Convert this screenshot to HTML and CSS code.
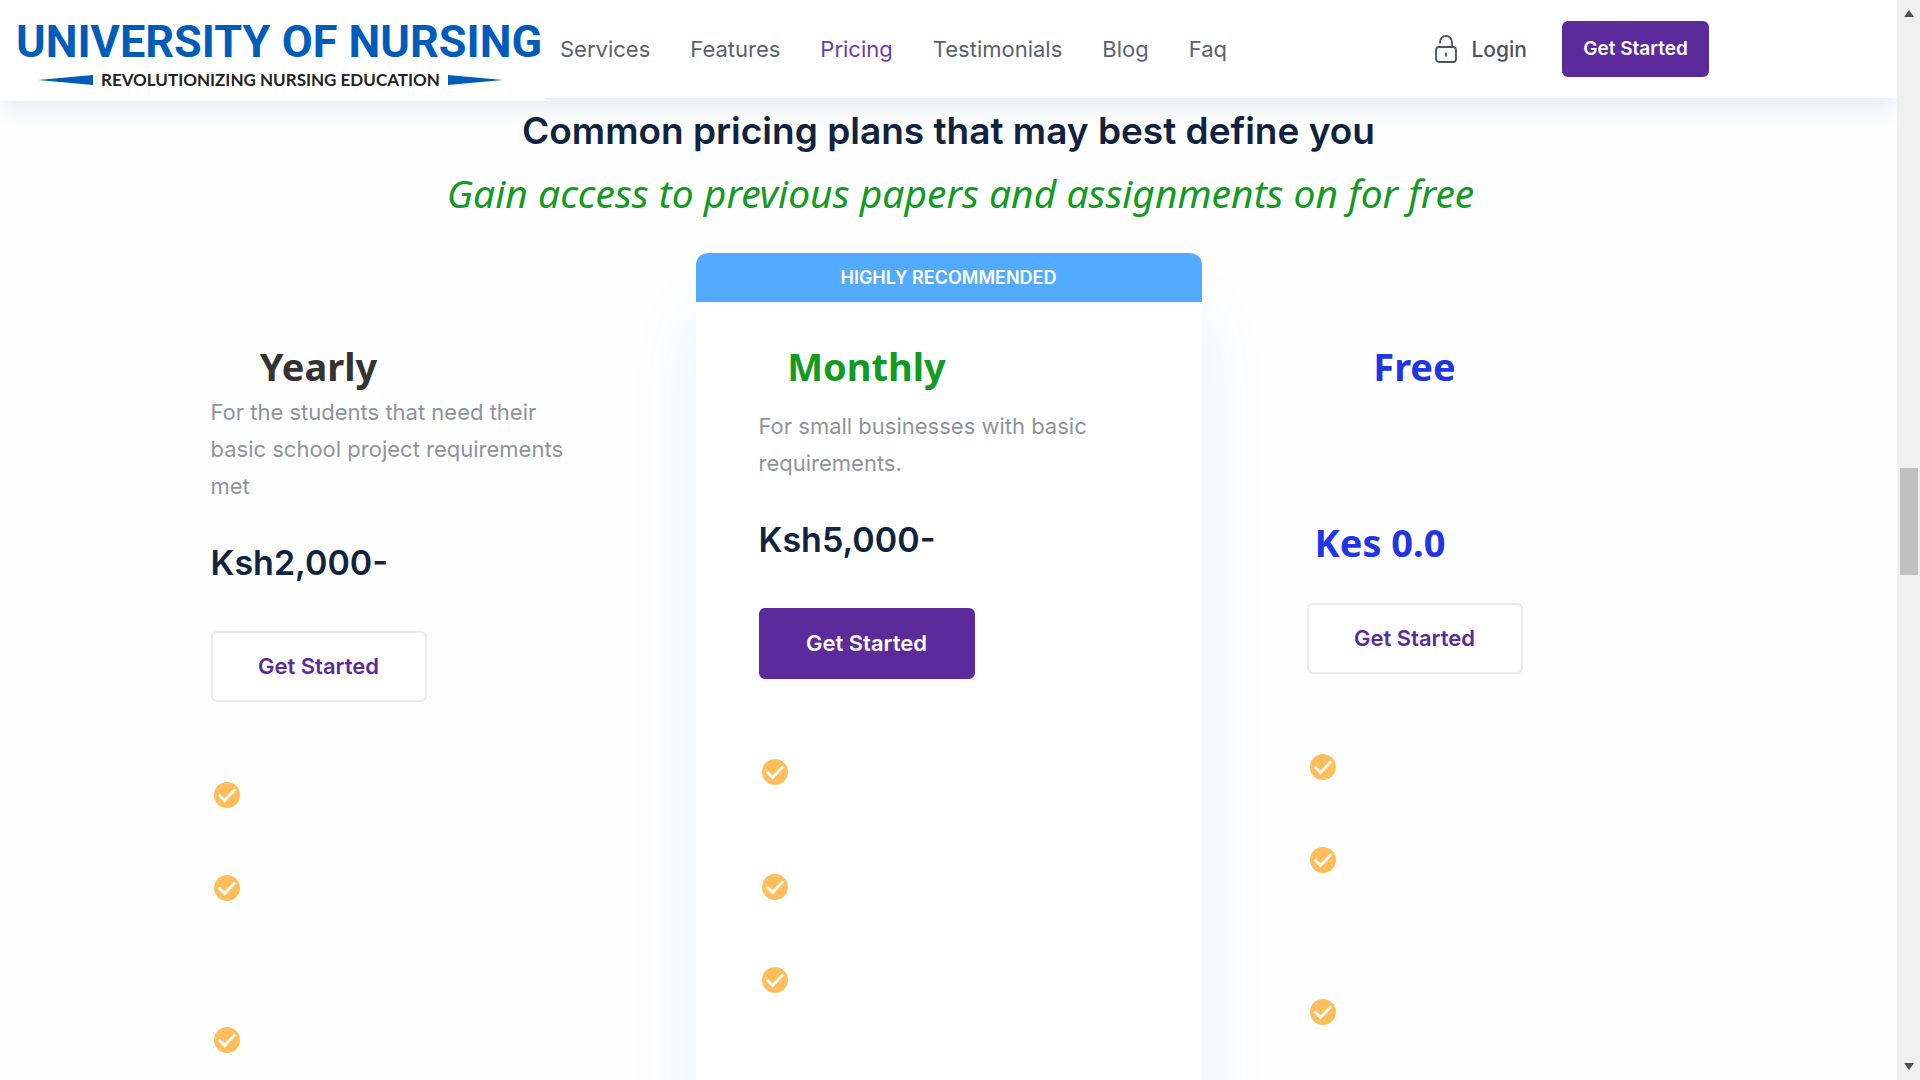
FILE: index.html
```html
<!DOCTYPE html>
<html lang="en">
<head>
<meta charset="utf-8">
<title>University of Nursing - Pricing</title>
<link rel="stylesheet" href="styles.css">
</head>
<body>
<svg class="sprite" aria-hidden="true">
  <symbol id="check" viewBox="0 0 26 26">
    <circle cx="13" cy="13" r="13" fill="#ffbe5a"/>
    <path d="M4.8 12.8 10.6 18.4 21.2 7.4" fill="none" stroke="#fff" stroke-width="2.8"/>
  </symbol>
</svg>
<div class="page">
  <div class="content">
    <header class="header">
      <a class="logo" href="#">
        <span class="logo-name">UNIVERSITY OF NURSING</span>
        <span class="logo-line">
          <svg class="wedge" viewBox="0 0 55 10"><path d="M0 5 55 0V10Z" fill="#005cb9"/></svg>
          <span class="tagline">REVOLUTIONIZING NURSING EDUCATION</span>
          <svg class="wedge" viewBox="0 0 55 10"><path d="M55 5 0 0V10Z" fill="#005cb9"/></svg>
        </span>
      </a>
      <nav class="nav">
        <a href="#">Services</a>
        <a href="#">Features</a>
        <a class="active" href="#">Pricing</a>
        <a href="#">Testimonials</a>
        <a href="#">Blog</a>
        <a href="#">Faq</a>
      </nav>
      <div class="actions">
        <a class="login" href="#">
          <svg class="lock" viewBox="0 0 22 28" fill="none" stroke="#4d5460" stroke-width="1.8"><rect x="1" y="12" width="20" height="15" rx="3"/><path d="M5 8.500V7a6 6 0 0 1 12 0v5M11 17.500v4"/></svg>
          Login
        </a>
        <button class="btn btn-solid btn-small" type="button">Get Started</button>
      </div>
    </header>
    <main class="pricing">
      <h1 class="heading">Common pricing plans that may best define you</h1>
      <p class="subheading">Gain access to previous papers and assignments on for free</p>
      <div class="plans">
        <section class="plan">
          <h2 class="plan-name">Yearly</h2>
          <p class="desc">For the students that need their basic school project requirements met</p>
          <p class="price">Ksh2,000-</p>
          <button class="btn btn-outline" type="button">Get Started</button>
          <ul class="features">
            <li><svg class="check"><use href="#check"/></svg></li>
            <li class="tall"><svg class="check"><use href="#check"/></svg></li>
            <li><svg class="check"><use href="#check"/></svg></li>
          </ul>
        </section>
        <section class="plan plan-featured">
          <p class="banner">HIGHLY RECOMMENDED</p>
          <h2 class="plan-name">Monthly</h2>
          <p class="desc">For small businesses with basic requirements.</p>
          <p class="price">Ksh5,000-</p>
          <button class="btn btn-solid" type="button">Get Started</button>
          <ul class="features">
            <li class="medium"><svg class="check"><use href="#check"/></svg></li>
            <li><svg class="check"><use href="#check"/></svg></li>
            <li><svg class="check"><use href="#check"/></svg></li>
          </ul>
        </section>
        <section class="plan plan-free">
          <h2 class="plan-name">Free</h2>
          <p class="price">Kes 0.0</p>
          <button class="btn btn-outline" type="button">Get Started</button>
          <ul class="features">
            <li><svg class="check"><use href="#check"/></svg></li>
            <li class="tall"><svg class="check"><use href="#check"/></svg></li>
            <li><svg class="check"><use href="#check"/></svg></li>
          </ul>
        </section>
      </div>
    </main>
  </div>
  <div class="scrollbar" aria-hidden="true">
    <svg class="arrow" viewBox="0 0 10 7"><path d="M5 0 10 7H0Z" fill="#505050"/></svg>
    <div class="track"><div class="thumb"></div></div>
    <svg class="arrow" viewBox="0 0 10 7"><path d="M0 0H10L5 7Z" fill="#505050"/></svg>
  </div>
</div>
</body>
</html>
```
FILE: styles.css
```css
* { box-sizing: border-box; }
body {
  margin: 0;
  background: #fff;
  font-family: Inter, "Liberation Sans", sans-serif;
  color: #11233f;
}
h1, h2, p, ul { margin: 0; padding: 0; }
ul { list-style: none; }
a { color: inherit; text-decoration: none; }
.sprite { display: none; }

.page { display: flex; height: 100vh; overflow: hidden; }
.content { flex: 1; min-width: 0; overflow: hidden; background: #fefefe; }

.header {
  position: relative;
  display: flex;
  align-items: center;
  height: 98px;
  padding-right: 188px;
  background: #fff;
  box-shadow: 0 8px 24px rgba(40, 80, 120, 0.12);
}
.logo {
  display: flex;
  flex-direction: column;
  align-self: flex-start;
  flex: none;
  width: 546px;
  height: 101px;
  padding: 16px 0 0 16px;
  background: #fff;
}
.logo-name {
  font: bold 45px/52px Roboto, "Liberation Sans", sans-serif;
  color: #005cb9;
  white-space: nowrap;
}
.logo-line { display: flex; align-items: center; gap: 8px; padding-left: 22px; }
.wedge { flex: none; width: 55px; height: 10px; }
.tagline { font: bold 17px/24px Lato, sans-serif; color: #222; white-space: nowrap; }

.nav {
  display: flex;
  gap: 40px;
  padding-left: 14px;
  font-size: 22px;
  line-height: 32px;
  color: #5b626d;
}
.nav .active { color: #6d3bb0; }
.actions { display: flex; align-items: center; gap: 35px; margin-left: auto; }
.login {
  display: flex;
  align-items: center;
  gap: 15px;
  font-size: 21px;
  font-weight: 500;
  color: #4d5460;
}
.lock { width: 22px; height: 28px; }

.btn {
  width: 216px;
  height: 71px;
  padding: 0 0 2px;
  border: 2px solid #eee8f5;
  border-radius: 6px;
  background: #fff;
  font: 600 22px/32px Inter, "Liberation Sans", sans-serif;
  color: #5b2a9b;
}
.btn-solid { border-color: #5b2a9b; background: #5b2a9b; color: #fff; }
.btn-small { width: 147px; height: 56px; padding: 0; font-size: 19px; }

.pricing { padding-top: 9px; }
.heading { font-size: 37px; line-height: 48px; font-weight: 600; text-align: center; }
.subheading {
  margin-top: 14px;
  padding-left: 24px;
  font: italic 39px/48px "Noto Sans", sans-serif;
  color: #129a22;
  text-align: center;
}
.plans {
  display: grid;
  grid-template-columns: repeat(3, 1fr);
  gap: 42px;
  max-width: 1602px;
  margin: 36px auto 0;
}
.plan { padding: 89px 63px 0; }
.plan-featured {
  padding-top: 0;
  border-radius: 12px;
  background: #fff;
  box-shadow: 0 60px 70px rgba(70, 110, 200, 0.09);
  min-height: 1000px;
}
.banner {
  margin: 0 -63px 40px;
  border-radius: 12px 12px 0 0;
  background: #53abff;
  font-size: 18px;
  line-height: 49px;
  font-weight: 600;
  color: #fff;
  text-align: center;
}
.plan-name {
  width: 216px;
  font: bold 38px/48px "Noto Sans", sans-serif;
  color: #333;
  text-align: center;
}
.plan-featured .plan-name { color: #129a22; }
.plan-free .plan-name { color: #2035e6; }
.desc { margin-top: 4px; font-size: 22px; line-height: 37px; color: #8f949c; }
.plan-featured .desc { margin-top: 18px; }
.price { margin: 30px 0 40px; font-size: 34px; line-height: 56px; font-weight: 600; }
.plan-free .price {
  margin: 124px 0 33px;
  padding-left: 8px;
  font: bold 38px/56px "Noto Sans", sans-serif;
  color: #2035e6;
}
.features { padding: 80px 0 0 3px; }
.features li { height: 93px; }
.features .medium { height: 115px; }
.features .tall { height: 152px; }
.check { display: block; width: 26px; height: 26px; }

.scrollbar {
  display: flex;
  flex-direction: column;
  align-items: center;
  flex: none;
  width: 23px;
  padding: 10px 0;
  background: #f0f0f0;
}
.arrow { width: 10px; height: 7px; }
.track { flex: 1; display: flex; flex-direction: column; }
.track::before { content: ""; flex: 451; }
.track::after { content: ""; flex: 488; }
.thumb { width: 18px; height: 107px; background: #c1c1c1; }
```
